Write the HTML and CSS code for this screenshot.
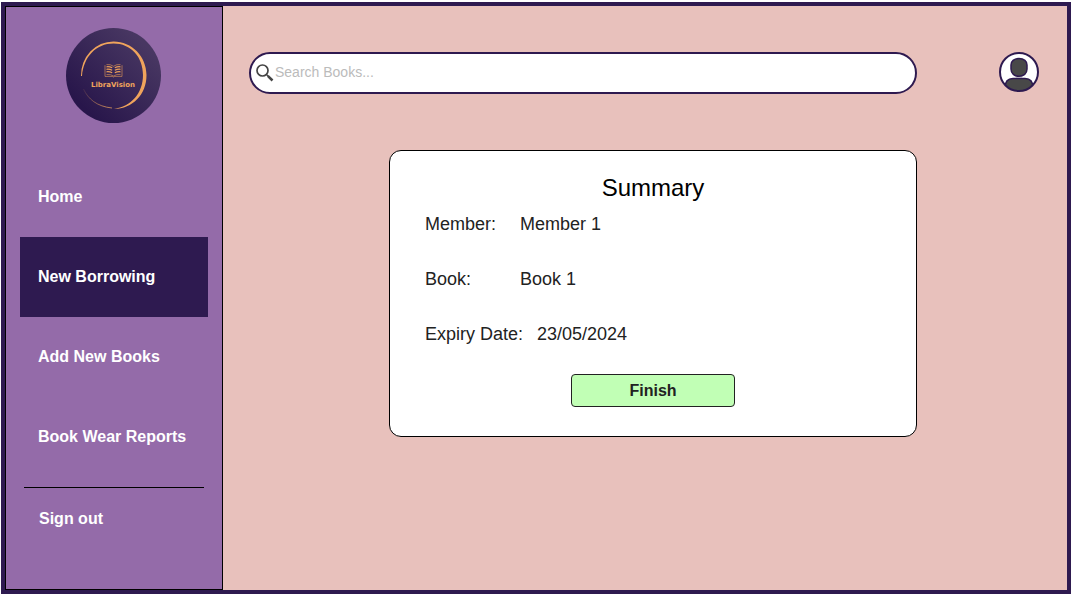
FILE: index.html
```html
<!DOCTYPE html>
<html lang="en">
<head>
<meta charset="utf-8">
<meta name="viewport" content="width=device-width, initial-scale=1">
<title>LibraVision - New Borrowing</title>
<link rel="stylesheet" href="styles.css">
</head>
<body class="page">
<div class="app">
  <aside class="sidebar">
    <svg class="logo" viewBox="0 0 95 95" role="img" aria-label="LibraVision">
      <defs>
        <linearGradient id="disc" x1="0.2" y1="0.85" x2="0.85" y2="0.2">
          <stop offset="0" stop-color="#28164b"/>
          <stop offset="1" stop-color="#483762"/>
        </linearGradient>
        <linearGradient id="tail" x1="0" y1="0" x2="1" y2="0.4">
          <stop offset="0" stop-color="#f0a45c" stop-opacity="0.1"/>
          <stop offset="1" stop-color="#f0a45c" stop-opacity="0.7"/>
        </linearGradient>
      </defs>
      <circle cx="47.500" cy="47.500" r="47.500" fill="url(#disc)"/>
      <path fill="#f0a45c" d="M15 48A32.500 34 0 0 1 47.500 13.400C66 13.400 80.500 28.500 80.500 47C80.500 67 66 81 48 80.800C65 79 77 65 77 47C77 29 65 15.500 47.500 15.500C30 15.500 17.500 29 16 48Z"/>
      <path fill="none" stroke="url(#tail)" stroke-width="1" d="M17.500 61C22 71 31 78.500 46 80"/>
      <g fill="none" stroke="#e89c58">
        <path stroke-width="0.600" d="M39 37.200V48.400H46.200L47.500 49L48.800 48.400H56V37.200M40.500 36.600Q44.500 36 47.500 38.300Q50.500 36 54.500 36.600M40.500 46.500Q44.500 46 47.500 48Q50.500 46 54.500 46.500"/>
        <path stroke-width="1.200" d="M40.500 38.800Q43.500 38.400 46.200 39.800M40.500 41.300Q43.500 40.900 46.200 42.300M40.500 43.800Q43.500 43.400 46.200 44.800M48.800 39.800Q51.500 38.400 54.500 38.800M48.800 42.300Q51.500 40.900 54.500 41.300M48.800 44.800Q51.500 43.400 54.500 43.800"/>
      </g>
      <text class="logo-text" x="47" y="58.500" text-anchor="middle">LibraVision</text>
    </svg>
    <nav class="nav">
      <a class="nav-link" href="#home">Home</a>
      <a class="nav-link nav-link-active" href="#borrow" aria-current="page">New Borrowing</a>
      <a class="nav-link" href="#add">Add New Books</a>
      <a class="nav-link" href="#reports">Book Wear Reports</a>
    </nav>
    <hr class="divider">
    <a class="sign-out" href="#signout">Sign out</a>
  </aside>
  <main class="main">
    <label class="search">
      <svg class="search-icon" viewBox="0 0 18 18" fill="none" stroke="#444" aria-hidden="true">
        <circle cx="6.500" cy="6.500" r="5.500" stroke-width="1.700"/>
        <path d="M10.500 10.500L12 12" stroke-width="1.500"/>
        <path d="M11.800 11.800L16.500 16.500" stroke-width="2.500"/>
      </svg>
      <input class="search-input" type="search" placeholder="Search Books..." aria-label="Search Books">
    </label>
    <button class="avatar" type="button" aria-label="Profile">
      <svg class="avatar-art" viewBox="0 0 40 40" aria-hidden="true">
        <defs><clipPath id="face"><circle cx="20" cy="20" r="19"/></clipPath></defs>
        <circle cx="20" cy="20" r="19" fill="#fff"/>
        <g clip-path="url(#face)" fill="#484848" stroke="#2e1a50" stroke-width="1.500">
          <path d="M17 23V25.500H23V23" fill="#bdb5c8" stroke="none"/>
          <path d="M20 6.500C25 6.500 28 9.500 28 13V17C28 21.500 24.500 24.300 20 24.300S12 21.500 12 17V13C12 9.500 15 6.500 20 6.500Z"/>
          <path d="M6 36C6 29 9 26.500 14 26.500H26C31 26.500 34 29 34 36V42H6Z"/>
        </g>
        <circle cx="20" cy="20" r="19" fill="none" stroke="#2e1a50" stroke-width="2"/>
      </svg>
    </button>
    <section class="card">
      <h1 class="card-title">Summary</h1>
      <dl class="details">
        <div class="row"><dt class="term">Member:</dt><dd class="value">Member 1</dd></div>
        <div class="row"><dt class="term">Book:</dt><dd class="value">Book 1</dd></div>
        <div class="row"><dt class="term">Expiry Date:</dt><dd class="value">23/05/2024</dd></div>
      </dl>
      <button class="finish" type="button">Finish</button>
    </section>
  </main>
</div>
</body>
</html>
```
FILE: styles.css
```css
* {
  box-sizing: border-box;
}

.page {
  display: flex;
  min-height: 100vh;
  margin: 0;
  padding: 2px 2px 2px 1px;
  background: #fff;
  font-family: "Liberation Sans", Arial, sans-serif;
}

.app {
  display: flex;
  flex: 1;
  border: 4px solid #2e1a50;
  background: #e8c1bc;
}

.sidebar {
  display: flex;
  flex: 0 0 218px;
  flex-direction: column;
  padding: 21px 14px;
  border: 1px solid #000;
  background: #946ba9;
}

.logo {
  width: 95px;
  height: 95px;
  margin-left: 46px;
}

.logo-text {
  fill: #f0a45c;
  font-family: "DejaVu Sans", sans-serif;
  font-size: 7px;
  font-weight: bold;
}

.nav {
  display: flex;
  flex-direction: column;
  margin-top: 34px;
}

.nav-link,
.sign-out {
  color: #fff;
  font-size: 16px;
  font-weight: bold;
  line-height: 20px;
  text-decoration: none;
}

.nav-link {
  padding: 30px 18px;
}

.nav-link-active {
  background: #2e1a50;
}

.divider {
  align-self: stretch;
  margin: 10px 4px 21px;
  border: 0;
  border-top: 1px solid #000;
}

.sign-out {
  padding: 0 19px;
}

.main {
  display: grid;
  flex: 1;
  grid-template-columns: 1fr 40px;
  align-content: start;
  align-items: start;
  gap: 56px 82px;
  padding: 46px 28px 46px 26px;
}

.search {
  display: flex;
  align-items: center;
  gap: 1px;
  height: 42px;
  padding: 0 16px 0 5px;
  border: 2px solid #2e1a50;
  border-radius: 21px;
  background: #fff;
}

.search-icon {
  flex: none;
  width: 18px;
  height: 18px;
}

.search-input {
  flex: 1;
  min-width: 0;
  padding: 0 0 2px;
  border: 0;
  outline: 0;
  background: transparent;
  color: #222;
  font: 14px/20px "Liberation Sans", Arial, sans-serif;
  appearance: none;
}

.search-input::placeholder {
  color: #bbb;
}

.avatar {
  width: 40px;
  height: 40px;
  padding: 0;
  border: 0;
  border-radius: 50%;
  background: none;
}

.avatar-art {
  display: block;
}

.card {
  display: flex;
  flex-direction: column;
  margin-left: 140px;
  padding: 23px 35px 29px;
  border: 1px solid #000;
  border-radius: 12px;
  background: #fff;
}

.card-title {
  margin: 0 0 12px;
  color: #000;
  font-size: 24px;
  font-weight: normal;
  line-height: 28px;
  text-align: center;
}

.details {
  display: flex;
  flex-direction: column;
  gap: 35px;
  margin: 0 0 30px;
  color: #222;
  font-size: 18px;
  line-height: 20px;
}

.row {
  display: flex;
  gap: 14px;
}

.term {
  min-width: 81px;
}

.value {
  margin: 0;
}

.finish {
  align-self: center;
  width: 164px;
  padding: 0;
  border: 1px solid #222;
  border-radius: 4px;
  background: #c1ffb5;
  color: #222;
  font: bold 16px/31px "Liberation Sans", Arial, sans-serif;
}
```
